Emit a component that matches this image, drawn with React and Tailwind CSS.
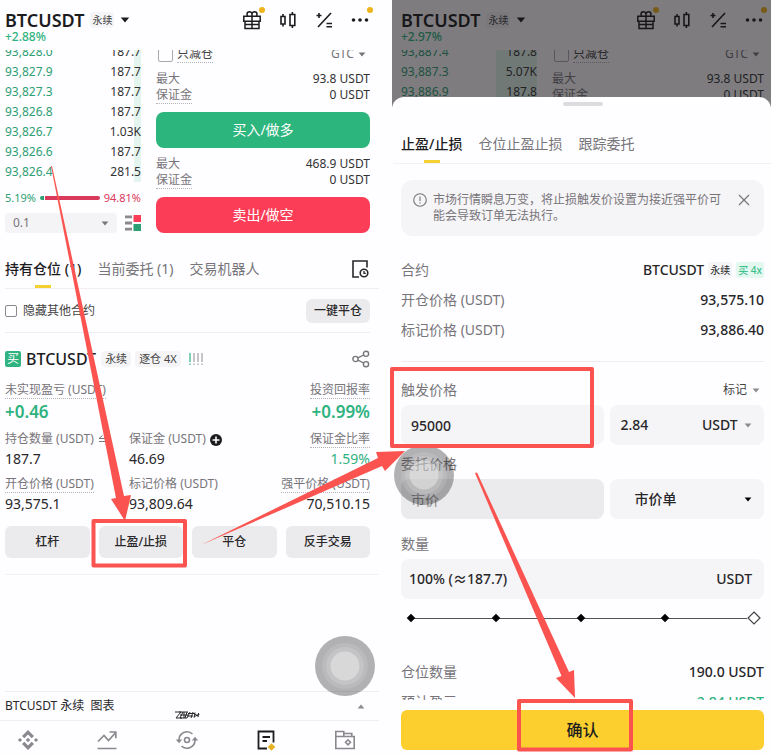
import clsx from 'clsx';

const FONT = "font-['Noto_Sans','Noto_Sans_CJK_SC',sans-serif]";

const LEFT_BOOK = [
  ['93,828.0', '187.7'],
  ['93,827.9', '187.7'],
  ['93,827.3', '187.7'],
  ['93,826.8', '187.7'],
  ['93,826.7', '1.03K'],
  ['93,826.6', '187.7'],
  ['93,826.4', '281.5'],
];

const RIGHT_BOOK = [
  ['93,887.4', '187.8'],
  ['93,887.3', '5.07K'],
  ['93,886.9', '187.8'],
];

const STATS = [
  [
    { label: '持仓数量 (USDT)', value: '187.7', icon: 'swap' },
    { label: '保证金 (USDT)', value: '46.69', icon: 'plus' },
    { label: '保证金比率', value: '1.59%', dotted: true, green: true },
  ],
  [
    { label: '开仓价格 (USDT)', value: '93,575.1', dotted: true },
    { label: '标记价格 (USDT)', value: '93,809.64' },
    { label: '强平价格 (USDT)', value: '70,510.15', dotted: true },
  ],
];

function Caret({ className, up }) {
  return (
    <svg viewBox="0 0 10 6" className={clsx('shrink-0 pointer-events-none', className)} fill="currentColor">
      <path d={up ? 'M0.8 5.5h8.4L5 0.5z' : 'M0.8 0.5h8.4L5 5.5z'} />
    </svg>
  );
}

function GiftIcon() {
  return (
    <svg viewBox="0 0 20 20" className="w-5 h-5" fill="none" stroke="currentColor" strokeWidth="1.5">
      <path d="M1.800 6.200h16.400v5H1.800zM3 11.200v7.300h14v-7.300M10 6.200v12.300M3 14.500h14" />
      <path d="M10 6.200V4.500C10 2.800 9 1.800 7.500 1.800S5 2.800 5 4.200c0 .8.3 1.500.8 2M10 6.200V4.500c0-1.700 1-2.700 2.500-2.700S15 2.800 15 4.200c0 .8-.3 1.500-.8 2" />
    </svg>
  );
}

function CandlesIcon() {
  return (
    <svg viewBox="0 0 20 20" className="w-5 h-5" fill="none" stroke="currentColor" strokeWidth="1.6">
      <path d="M3 6.500h4v7.500H3zM5 4v2.500M5 14v2.500" />
      <path d="M12 4.500h4.800v11H12zM14.400 2v2.500M14.400 15.500V18" />
    </svg>
  );
}

function CalcIcon() {
  return (
    <svg viewBox="0 0 20 20" className="w-5 h-5" fill="none" stroke="currentColor" strokeWidth="1.6">
      <path d="M17 3 4 17M2.500 5.500h5M5 3v5M12.500 13.500h5.500M12.500 16.800h5.500" />
    </svg>
  );
}

function MoreIcon() {
  return (
    <svg viewBox="0 0 20 20" className="w-5 h-5" fill="currentColor">
      <circle cx="3.500" cy="10" r="1.800" />
      <circle cx="10" cy="10" r="1.800" />
      <circle cx="16.500" cy="10" r="1.800" />
    </svg>
  );
}

function Dot() {
  return <span className="absolute -top-[3px] -right-[3px] w-1.5 h-1.5 rounded-full bg-[#efb31c]" />;
}

function PairHeader({ change }) {
  return (
    <header className="pt-2.5 pb-1.5">
      <div className="flex items-center h-5">
        <h1 className="text-lg leading-5 font-semibold">BTCUSDT</h1>
        <span className="ml-1.5 px-0.5 text-[10px] leading-4 bg-[#f5f4f6] rounded-sm text-[#444]">永续</span>
        <Caret className="w-2.5 h-1.5 ml-1.5" />
        <div className="ml-auto flex gap-4 text-[#1c1c1e]">
          <button aria-label="礼物" className="relative"><GiftIcon /><Dot /></button>
          <button aria-label="K线"><CandlesIcon /></button>
          <button aria-label="计算器"><CalcIcon /></button>
          <button aria-label="更多" className="relative"><MoreIcon /><Dot /></button>
        </div>
      </div>
      <p className="text-xs leading-[14px] font-medium text-[#2fb380]">{change}</p>
    </header>
  );
}

function OrderBook({ rows, depth }) {
  return (
    <div className="relative -mt-2">
      <span className={clsx('absolute right-0 inset-y-0 bg-[#e3f5ee]', depth)} />
      <table className="relative w-full text-xs">
        <tbody>
          {rows.map(([price, amount]) => (
            <tr key={price} className="h-5">
              <td className="p-0 leading-5 text-[#2d9f74]">{price}</td>
              <td className="p-0 leading-5 text-right text-[#333]">{amount}</td>
            </tr>
          ))}
        </tbody>
      </table>
    </div>
  );
}

function MaxInfo({ max }) {
  return (
    <dl className="grid grid-cols-2 auto-rows-[16px] text-xs leading-4">
      <dt className="text-[#77757a]">最大</dt>
      <dd className="text-right text-[#333]">{max} USDT</dd>
      <dt className="text-[#77757a]"><span className="inline-block border-b border-dotted border-[#b5b3b8]">保证金</span></dt>
      <dd className="text-right text-[#333]">0 USDT</dd>
    </dl>
  );
}

function TradeArea({ rows, depth, full }) {
  return (
    <div className="flex gap-[15px] overflow-hidden">
      <div className="w-[136px] shrink-0">
        <OrderBook rows={rows} depth={depth} />
        {full && (
          <>
            <div className="mt-2 h-4 flex items-center text-[11px] leading-4">
              <span className="text-[#2d9f74]">5.19%</span>
              <span className="ml-1 w-1 h-1 rounded-l-full bg-[#2d9f74]" />
              <span className="ml-px flex-1 h-1 rounded-r-full bg-[#d9395a]" />
              <span className="ml-1 text-[#d9395a]">94.81%</span>
            </div>
            <div className="mt-[7px] flex items-center gap-2">
              <div className="flex-1 h-5 px-2 flex items-center bg-[#f4f3f5] rounded-sm text-[#77757a]">
                <select aria-label="深度" className="appearance-none flex-1 text-xs leading-5 outline-none">
                  <option>0.1</option>
                </select>
                <Caret className="w-2 h-[5px]" />
              </div>
              <button aria-label="盘口样式">
                <svg viewBox="0 0 16 16" className="w-4 h-4">
                  <path d="M0 .5h7v2.800H0zM0 6.600h7v2.800H0zM0 12.700h7v2.800H0z" fill="#8b898e" />
                  <path d="M8.500 0H16v7H8.500z" fill="#fb3d57" />
                  <path d="M8.500 9H16v7H8.500z" fill="#2d9f74" />
                </svg>
              </button>
            </div>
          </>
        )}
      </div>
      <div className="flex-1">
        <div className="-mt-1 h-4 flex items-center text-xs leading-4">
          <label className="flex items-center gap-1 text-[#444]">
            <input type="checkbox" className="appearance-none ml-0.5 w-[15px] h-[15px] border border-[#aaa8ad] rounded-xs" />
            <span className="border-b border-dotted border-[#b5b3b8]">只减仓</span>
          </label>
          <span className="ml-auto mr-1 flex items-center gap-1 text-[#77757a]">
            <select aria-label="有效期" className="appearance-none outline-none">
              <option>GTC</option>
            </select>
            <Caret className="w-2 h-[5px]" />
          </span>
        </div>
        <div className="mt-[9px]"><MaxInfo max="93.8" /></div>
        {full && (
          <>
            <button className="mt-[9px] w-full h-9 rounded-lg bg-[#2cb57d] text-white text-sm">买入/做多</button>
            <div className="mt-2"><MaxInfo max="468.9" /></div>
            <button className="mt-[9px] w-full h-9 rounded-lg bg-[#fb3d57] text-white text-sm">卖出/做空</button>
          </>
        )}
      </div>
    </div>
  );
}

function Tab({ active, children }) {
  return (
    <button className={clsx('flex flex-col items-center text-sm leading-5', active ? 'font-medium text-[#1c1c1e]' : 'text-[#77757a]')}>
      {children}
      <span className={clsx('mt-1.5 w-4 h-[3px]', active && 'bg-[#f5d033]')} />
    </button>
  );
}

function StatLabel({ dotted, children }) {
  return (
    <span className={clsx('inline-block border-b border-dotted', dotted ? 'border-[#b5b3b8]' : 'border-transparent')}>
      {children}
    </span>
  );
}

function Stat({ item, last }) {
  return (
    <div className={clsx(last && 'text-right')}>
      <dt className="flex items-center gap-1 h-[17px] text-xs leading-4 text-[#77757a] whitespace-nowrap">
        <span className={clsx(last && 'ml-auto')}><StatLabel dotted={item.dotted}>{item.label}</StatLabel></span>
        {item.icon === 'swap' && (
          <svg viewBox="0 0 12 12" className="w-3 h-3" fill="none" stroke="currentColor">
            <path d="M1 4.500h10M1 4.500 4.500 1.500M1 7.500h10M11 7.500l-3.500 3" />
          </svg>
        )}
        {item.icon === 'plus' && (
          <svg viewBox="0 0 12 12" className="w-3 h-3 text-[#1c1c1e]">
            <circle cx="6" cy="6" r="6" fill="currentColor" />
            <path d="M6 2.500v7M2.500 6h7" stroke="#fff" strokeWidth="1.600" />
          </svg>
        )}
      </dt>
      <dd className={clsx('mt-[3px] text-sm leading-4', item.green ? 'text-[#2fb380]' : 'text-[#28272a]')}>{item.value}</dd>
    </div>
  );
}

function AssistiveBall({ className }) {
  return (
    <svg viewBox="0 0 60 60" className={clsx('absolute w-[60px] h-[60px] pointer-events-none', className)}>
      <circle cx="30" cy="30" r="30" fill="#000" fillOpacity="0.300" />
      <circle cx="30" cy="30" r="23" fill="#fff" fillOpacity="0.120" />
      <circle cx="30" cy="30" r="19" fill="#fff" fillOpacity="0.150" />
      <circle cx="30" cy="30" r="14.500" fill="#fff" fillOpacity="0.350" />
    </svg>
  );
}

function BottomNav() {
  return (
    <nav className="border-t border-[#efedf0] h-[34px] pt-2 pl-2 pr-[14px] -ml-[5px] flex items-start justify-between text-[#8b898e]">
      <a href="#home" aria-label="首页" className="w-10 flex justify-center">
        <svg viewBox="0 0 22 22" className="w-[22px] h-[22px]" fill="currentColor">
          <path d="M11 1 17 7l-2.300 2.300L11 5.600 7.300 9.300 5 7zM11 21l-6-6 2.300-2.300L11 16.400l3.700-3.700L17 15zM11 8.800l2.200 2.200-2.200 2.200L8.800 11zM3 8.900 5.100 11 3 13.100.9 11zM19 8.900l2.100 2.100-2.100 2.100-2.100-2.100z" />
        </svg>
      </a>
      <a href="#markets" aria-label="行情" className="w-10 flex justify-center">
        <svg viewBox="0 0 22 22" className="w-[22px] h-[22px]" fill="none" stroke="currentColor" strokeWidth="1.700">
          <path d="M2 12.500 8 6.500l4.500 5 6.800-7.500M13.500 3h6.300v6.300M1.500 19.500h19" />
        </svg>
      </a>
      <a href="#trade" aria-label="交易" className="relative w-10 flex justify-center">
        <svg viewBox="0 0 26 8" className="absolute -top-[18px] w-[26px] h-2 text-[#28272a]" fill="none" stroke="currentColor" strokeWidth="1">
          <path d="M1 1h6L2 7h6M9 1 6 7M5 1h9M6 4h8M6 7h7M13 1l-2 6M10 1v6M16 1l-3 6M14 2.500h6M13 5h6M19 1l-2 6M21 1.500l-1 5M20 2.500l5 3M20 6l5-3M22 4a1.500 1.500 0 1 0 2-2" />
        </svg>
        <svg viewBox="0 0 24 22" className="w-6 h-[22px]" fill="none" stroke="currentColor" strokeWidth="1.600">
          <path d="M4 11.500V11a8 8 0 0 1 13.500-6M20 10.500v.5a8 8 0 0 1-13.500 6" />
          <circle cx="12" cy="11" r="2.500" />
          <path d="M.8 10.500h6.400L4 14.200zM16.800 11.500h6.400L20 7.800z" fill="currentColor" stroke="none" />
        </svg>
      </a>
      <a href="#futures" aria-label="合约" className="w-10 flex justify-center">
        <svg viewBox="0 0 22 22" className="w-[22px] h-[22px]" fill="none" stroke="#1c1c1e" strokeWidth="1.800">
          <path d="M12 19.500H3.500v-17h15v11M7.500 8h7.500M7.500 12h4.500" />
          <path d="m16.500 14.200 3.800 3.800-3.800 3.800-3.800-3.800z" fill="#e6b422" stroke="none" />
        </svg>
      </a>
      <a href="#assets" aria-label="资产" className="w-10 flex justify-center">
        <svg viewBox="0 0 22 22" className="w-[22px] h-[22px]" fill="none" stroke="currentColor" strokeWidth="1.600">
          <path d="M1.800 7.500h18.400v12H1.800zM1.800 7.500v-5h8v5M9.800 4.500h8v3" />
          <path d="m14 10.800 2.500 2.500-2.500 2.500-2.500-2.500z" />
        </svg>
      </a>
    </nav>
  );
}

function PositionsScreen() {
  return (
    <section className="min-w-0 flex flex-col pl-[5px]">
      <div className="pr-[9px]">
        <PairHeader change="+2.88%" />
        <TradeArea rows={LEFT_BOOK} depth="w-[7px]" full />
      </div>

      <div className="mt-[26px] pr-[9px] flex items-start gap-4 border-b border-[#efedf0]">
        <Tab active>持有仓位 (1)</Tab>
        <Tab>当前委托 (1)</Tab>
        <Tab>交易机器人</Tab>
        <button aria-label="历史记录" className="ml-auto">
          <svg viewBox="0 0 20 20" className="w-5 h-5" fill="none" stroke="#28272a" strokeWidth="1.600">
            <path d="M9 18H3V2h14v6.500" />
            <circle cx="14" cy="14" r="3.800" />
            <path d="M14 12v2.300h1.800" strokeWidth="1.300" />
          </svg>
        </button>
      </div>

      <div className="mr-[9px] h-11 flex items-center justify-between border-b border-[#efedf0]">
        <label className="flex items-center gap-1.5 text-xs text-[#444]">
          <input type="checkbox" className="appearance-none w-3 h-3 border border-[#8b898e] rounded-xs" />
          隐藏其他合约
        </label>
        <button className="h-6 px-2 rounded-md bg-[#ebeaec] text-xs font-medium text-[#28272a]">一键平仓</button>
      </div>

      <article className="pr-[9px] pt-[18px] pb-4 border-b border-[#f3f1f4]">
        <div className="h-4 flex items-center">
          <span className="w-4 h-4 rounded-xs bg-[#2fb380] text-white text-xs leading-4 text-center">买</span>
          <h2 className="ml-[5px] text-base leading-4 font-medium">BTCUSDT</h2>
          <span className="ml-[5px] px-1 text-[11px] leading-4 rounded-sm bg-[#f5f4f6] text-[#444]">永续</span>
          <span className="ml-1 px-1 text-[11px] leading-4 rounded-sm bg-[#f5f4f6] text-[#444]">逐仓 4X</span>
          <svg viewBox="0 0 14 12" className="ml-2 w-3.5 h-3" strokeWidth="1.200" fill="none">
            <path d="M1 0v9M1 10.500v1.500" stroke="#2fb380" />
            <path d="M5 0v9M9 0v9M13 0v9M5 10.500v1.500M9 10.500v1.500M13 10.500v1.500" stroke="#a3a1a6" />
          </svg>
          <button aria-label="分享" className="ml-auto">
            <svg viewBox="0 0 18 18" className="w-[18px] h-[18px]" fill="none" stroke="#77757a" strokeWidth="1.400">
              <circle cx="3.500" cy="9" r="2.600" />
              <circle cx="14" cy="3.800" r="2.600" />
              <circle cx="14" cy="14.200" r="2.600" />
              <path d="m5.900 7.900 5.700-2.900M5.900 10.100l5.700 2.900" />
            </svg>
          </button>
        </div>

        <dl className="mt-[15px] flex justify-between">
          <div>
            <dt className="h-[17px] text-xs leading-4 text-[#77757a]"><StatLabel dotted>未实现盈亏 (USDT)</StatLabel></dt>
            <dd className="mt-[3px] text-[17px] leading-5 font-semibold text-[#2fb380]">+0.46</dd>
          </div>
          <div className="text-right">
            <dt className="h-[17px] text-xs leading-4 text-[#77757a]"><StatLabel dotted>投资回报率</StatLabel></dt>
            <dd className="mt-[3px] text-[17px] leading-5 font-semibold text-[#2fb380]">+0.99%</dd>
          </div>
        </dl>
        {STATS.map((row) => (
          <dl key={row[0].label} className="mt-[9px] grid grid-cols-[34%_33%_33%]">
            {row.map((item, i) => (
              <Stat key={item.label} item={item} last={i === 2} />
            ))}
          </dl>
        ))}

        <div className="mt-[14px] grid grid-cols-4 gap-[9px]">
          {['杠杆', '止盈/止损', '平仓', '反手交易'].map((name) => (
            <button key={name} className="h-8 rounded-md bg-[#ebeaec] text-xs font-medium text-[#28272a]">{name}</button>
          ))}
        </div>
      </article>

      <div className="relative flex-1 min-h-[100px]">
        <AssistiveBall className="right-1 -bottom-[5px]" />
      </div>
      <button className="h-[29px] pr-[14px] flex items-center justify-between border-t border-[#efedf0] text-xs text-[#28272a]">
        <span>BTCUSDT 永续&nbsp; 图表</span>
        <Caret up className="w-2 h-[5px] text-[#8b898e]" />
      </button>
      <BottomNav />
    </section>
  );
}

function InfoRow({ label, children }) {
  return (
    <div className="flex items-center justify-between h-5 text-sm leading-5">
      <dt className="text-[#77757a]">{label}</dt>
      <dd className="flex items-center font-medium text-[#28272a]">{children}</dd>
    </div>
  );
}

function AmountSlider() {
  return (
    <div className="relative mt-[9px] h-5">
      <div className="h-5 ml-[7px] mr-[3px] flex items-center justify-between">
        {[0, 25, 50, 75].map((n) => (
          <div key={n} className="flex-1 flex items-center">
            <span className="w-1.5 h-1.5 rotate-45 bg-black" />
            <span className="flex-1 h-px bg-[#55535a]" />
          </div>
        ))}
        <svg viewBox="0 0 14 14" className="w-3.5 h-3.5" fill="#fff" stroke="#444" strokeWidth="1.200">
          <path d="m7 1 6 6-6 6-6-6z" />
        </svg>
      </div>
      <input type="range" aria-label="数量百分比" defaultValue="100" step="25" className="absolute inset-0 w-full opacity-0" />
    </div>
  );
}

const FIELD = 'h-10 rounded-lg bg-[#f5f4f6] flex items-center';
const PAIR = 'mt-[5px] grid grid-cols-[minmax(0,57fr)_minmax(0,43fr)] gap-1.5 text-sm font-medium text-[#28272a]';

function StopSheet() {
  return (
    <div className="relative -mt-[13px] flex-1 flex flex-col rounded-t-xl bg-[#fefdff] pl-[9px] pr-[7px] pt-[5px] pb-1">
      <span className="mx-auto w-10 h-1 rounded-full bg-[#dddbdf]" />
      <div className="mt-7 -mx-2 px-2 flex gap-4 border-b border-[#f3f1f4]">
        <Tab active>止盈/止损</Tab>
        <Tab>仓位止盈止损</Tab>
        <Tab>跟踪委托</Tab>
      </div>

      <div className="mt-4 p-3 flex gap-[6px] rounded-xl bg-[#f5f4f6] text-xs leading-4 text-[#77757a]">
        <svg viewBox="0 0 14 14" className="w-3.5 h-3.5 mt-px shrink-0" fill="none" stroke="currentColor" strokeWidth="1.100">
          <circle cx="7" cy="7" r="6.300" />
          <path d="M7 3.500v4.500M7 9.300v1.300" />
        </svg>
        <p className="flex-1">市场行情瞬息万变，将止损触发价设置为接近强平价可能会导致订单无法执行。</p>
        <button aria-label="关闭" className="ml-2 mr-0.5 self-start h-4">
          <svg viewBox="0 0 12 12" className="w-3 h-3" fill="none" stroke="currentColor" strokeWidth="1.200">
            <path d="m1 1 10 10M11 1 1 11" />
          </svg>
        </button>
      </div>

      <dl className="mt-6 pb-[21px] space-y-2.5 border-b border-[#efedf0]">
        <InfoRow label="合约">
          BTCUSDT
          <span className="ml-1 px-0.5 text-[10px] leading-4 rounded-xs bg-[#f5f4f6] font-normal">永续</span>
          <span className="ml-1 px-0.5 text-[10px] leading-4 rounded-xs bg-[#e3f8ee] text-[#3cc08d]">买 4x</span>
        </InfoRow>
        <InfoRow label="开仓价格 (USDT)">93,575.10</InfoRow>
        <InfoRow label="标记价格 (USDT)">93,886.40</InfoRow>
      </dl>

      <div className="mt-[18px] flex items-center justify-between">
        <label htmlFor="trigger" className="text-sm leading-5 text-[#77757a]">触发价格</label>
        <span className="mr-1 flex items-center gap-1 text-xs text-[#444]">
          <select aria-label="触发类型" className="appearance-none leading-5 outline-none">
            <option>标记</option>
          </select>
          <Caret className="w-2 h-[5px] text-[#8b898e]" />
        </span>
      </div>
      <div className={PAIR}>
        <input id="trigger" type="text" defaultValue="95000" className={clsx(FIELD, 'px-2.5 outline-none')} />
        <div className={clsx(FIELD, 'px-2.5')}>
          <input type="text" aria-label="止盈金额" defaultValue="2.84" className="min-w-0 flex-1 outline-none" />
          <select aria-label="单位" className="appearance-none outline-none">
            <option>USDT</option>
          </select>
          <Caret className="ml-1.5 mr-0.5 w-2 h-[5px] text-[#8b898e]" />
        </div>
      </div>

      <label htmlFor="price" className="mt-[9px] text-sm leading-5 text-[#77757a]">委托价格</label>
      <div className={clsx(PAIR, 'relative')}>
        <input id="price" type="text" disabled placeholder="市价" className="h-10 px-2.5 rounded-lg bg-[#ebeaec] font-normal placeholder:text-[#8b898e]" />
        <div className={clsx(FIELD, 'pl-6 pr-3')}>
          <select aria-label="订单类型" className="appearance-none flex-1 outline-none">
            <option>市价单</option>
          </select>
          <Caret className="w-2 h-[5px] text-black" />
        </div>
        <AssistiveBall className="-left-[7px] -top-[34px]" />
      </div>

      <label htmlFor="amount" className="mt-[15px] text-sm leading-5 text-[#77757a]">数量</label>
      <div className={clsx(FIELD, 'mt-[5px] pl-2 pr-3 text-sm font-medium text-[#28272a]')}>
        <input id="amount" type="text" defaultValue="100% (≈187.7)" className="min-w-0 flex-1 outline-none" />
        <span>USDT</span>
      </div>
      <AmountSlider />

      <dl className="mt-[34px]">
        <InfoRow label="仓位数量">190.0 USDT</InfoRow>
        <div className="mt-2.5 h-2 overflow-hidden">
          <InfoRow label="预计盈亏"><span className="text-[#2fb380]">2.84 USDT</span></InfoRow>
        </div>
      </dl>
      <button className="mt-2.5 h-10 shrink-0 rounded-md bg-[#fccf2f] text-base font-medium text-[#1c1c1e]">确认</button>
    </div>
  );
}

function OrderScreen() {
  return (
    <section className="min-w-0 flex flex-col">
      <div className="relative h-[110px] overflow-hidden pl-[9px] pr-[7px]">
        <PairHeader change="+2.97%" />
        <TradeArea rows={RIGHT_BOOK} depth="w-[41px]" />
        <div className="absolute inset-0 bg-[#141216]/55" />
      </div>
      <StopSheet />
    </section>
  );
}

// Red boxes and arrows that walk through the three steps
function Guide() {
  return (
    <svg viewBox="0 0 771 754" preserveAspectRatio="none" className="absolute inset-0 w-full h-full pointer-events-none">
      <g fill="#fa5350">
        <path d="M51 166h1l72 330 7-1-6 26-14-22 5-1z" />
        <path d="m201 545 177-87-2-6 29-1-20 20-3-5z" />
        <path d="m475 473 2-.5 92 199.500 5-2 1 28-19-20 5.500-2z" />
      </g>
      <g fill="none" stroke="#fa5350" strokeWidth="4" strokeLinejoin="round">
        <rect x="93.500" y="521" width="91.500" height="44.500" />
        <rect x="392" y="369" width="200" height="77" />
        <rect x="519" y="701" width="112" height="48.500" />
      </g>
    </svg>
  );
}

export default function App() {
  return (
    <main className={clsx('relative min-h-screen grid grid-cols-2 gap-[13px] bg-[#fefdff] text-[#1c1c1e]', FONT)}>
      <PositionsScreen />
      <OrderScreen />
      <Guide />
    </main>
  );
}
